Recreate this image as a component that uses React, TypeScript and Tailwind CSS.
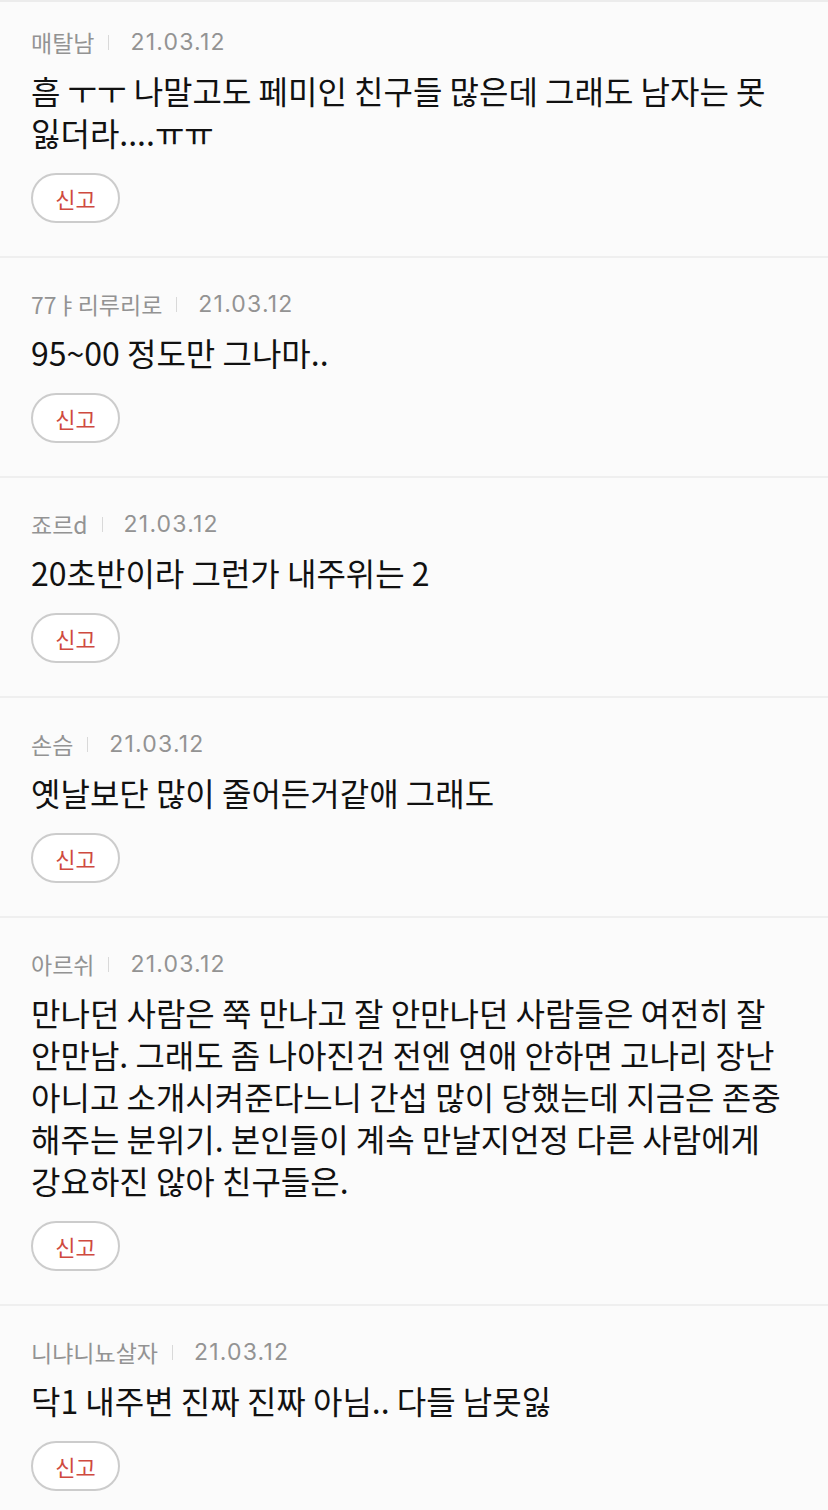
import React from "react";

interface Comment {
  name: string;
  date: string;
  text: string;
}

const comments: Comment[] = [
  {
    name: "매탈남",
    date: "21.03.12",
    text: "흠 ㅜㅜ 나말고도 페미인 친구들 많은데 그래도 남자는 못 잃더라....ㅠㅠ",
  },
  { name: "77ㅑ리루리로", date: "21.03.12", text: "95~00 정도만 그나마.." },
  { name: "죠르d", date: "21.03.12", text: "20초반이라 그런가 내주위는 2" },
  { name: "손슴", date: "21.03.12", text: "옛날보단 많이 줄어든거같애 그래도" },
  {
    name: "아르쉬",
    date: "21.03.12",
    text: "만나던 사람은 쭉 만나고 잘 안만나던 사람들은 여전히 잘 안만남. 그래도 좀 나아진건 전엔 연애 안하면 고나리 장난 아니고 소개시켜준다느니 간섭 많이 당했는데 지금은 존중 해주는 분위기. 본인들이 계속 만날지언정 다른 사람에게 강요하진 않아 친구들은.",
  },
  {
    name: "니냐니뇨살자",
    date: "21.03.12",
    text: "닥1 내주변 진짜 진짜 아님.. 다들 남못잃",
  },
];

const CommentItem: React.FC<{ comment: Comment }> = ({ comment }) => (
  <div className="px-[31px] pt-[31px] pb-[33px] border-b-2 border-[#efefef] first:pt-[25px]">
    <div className="flex items-center text-[23px] leading-[30px] text-[#939393]">
      <span className="font-['Noto_Sans_CJK_KR',sans-serif]">{comment.name}</span>
      <span className="ml-[14px] mr-[21px] h-[15px] w-px bg-[#d9d9d9]" />
      <span className="tracking-[1.2px] font-['Inter',sans-serif]">{comment.date}</span>
    </div>
    <p className="mt-[12px] break-keep text-[32px] leading-[42px] text-[#111111] font-['Noto_Sans_CJK_KR',sans-serif]">
      {comment.text}
    </p>
    <button className="mt-[20px] flex h-[50px] w-[89px] items-center justify-center rounded-full border-2 border-[#cccccc] bg-white text-[22px] text-[#cf4a3f] font-['Noto_Sans_CJK_KR',sans-serif]">
      신고
    </button>
  </div>
);

export default function App() {
  return (
    <div className="min-h-screen border-t-2 border-[#ececec] bg-[#fbfbfb]">
      {comments.map((c, i) => (
        <CommentItem key={i} comment={c} />
      ))}
    </div>
  );
}
